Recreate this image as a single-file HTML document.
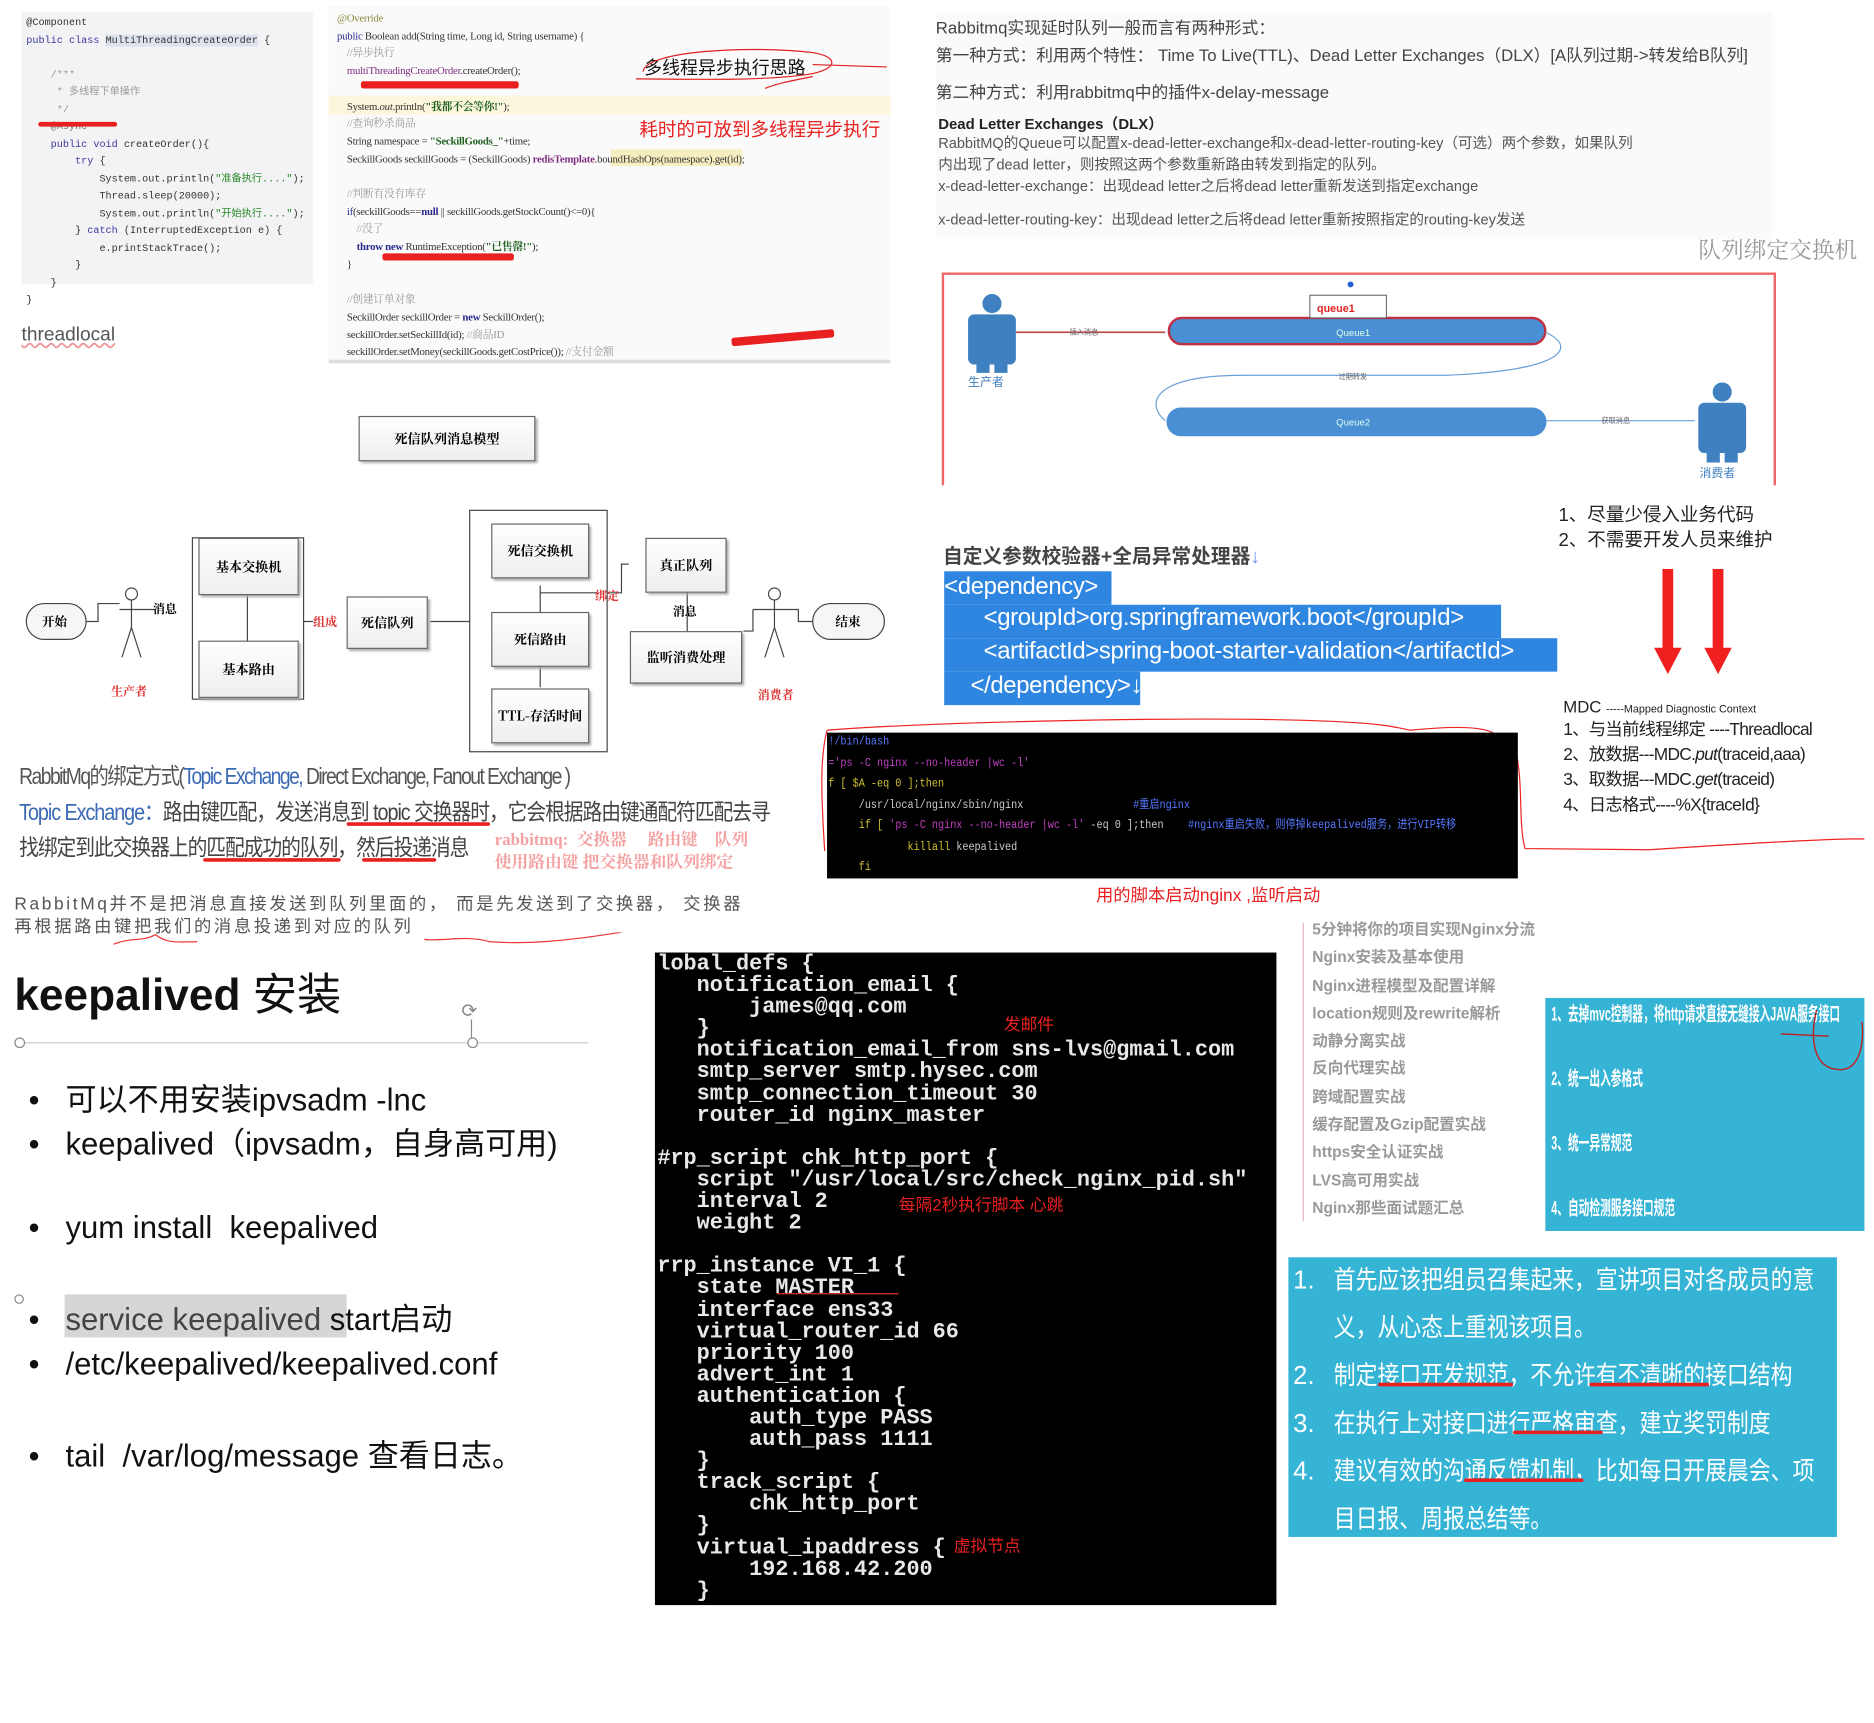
<!DOCTYPE html>
<html><head><meta charset="utf-8"><style>
html,body{margin:0;padding:0;background:#fff;width:1874px;height:1723px;overflow:hidden}
#w{position:absolute;left:0;top:0;width:1568px;height:1442px;overflow:hidden;transform:scale(1.19515);transform-origin:0 0;font-family:"Liberation Sans","Noto Sans CJK SC",sans-serif}
.a{position:absolute;white-space:nowrap}
pre.a{white-space:pre}
.m{font-family:"Liberation Mono","Noto Sans CJK SC",monospace}
.s{font-family:"Liberation Serif","Noto Serif CJK SC",serif}
.box{position:absolute;border:1px solid #666;background:linear-gradient(#fff,#eee);box-shadow:2px 2px 2px #aaa;font-family:"Noto Serif CJK SC",serif;font-size:11px;font-weight:bold;display:flex;align-items:center;justify-content:center}
.ru{position:absolute;height:3px;background:#e82020;border-radius:2px}
</style></head><body><div id="w">

<!-- top-left code -->
<div class="a" style="left:18px;top:10px;width:244px;height:228px;background:#f3f3f5"></div>
<div class="a m" style="left:22px;top:12px;font-size:8.5px;line-height:14.5px;color:#333">
@Component<br>
<span style="color:#3a3aa0">public class</span> <span style="background:#dde3ee">MultiThreadingCreateOrder</span> {<br><br>
&nbsp;&nbsp;&nbsp;&nbsp;<span style="color:#999">/***</span><br>
&nbsp;&nbsp;&nbsp;&nbsp;&nbsp;<span style="color:#999">* 多线程下单操作</span><br>
&nbsp;&nbsp;&nbsp;&nbsp;&nbsp;<span style="color:#999">*/</span><br>
&nbsp;&nbsp;&nbsp;&nbsp;<span style="color:#777">@Async</span><br>
&nbsp;&nbsp;&nbsp;&nbsp;<span style="color:#3a3aa0">public void</span> createOrder(){<br>
&nbsp;&nbsp;&nbsp;&nbsp;&nbsp;&nbsp;&nbsp;&nbsp;<span style="color:#3a3aa0">try</span> {<br>
&nbsp;&nbsp;&nbsp;&nbsp;&nbsp;&nbsp;&nbsp;&nbsp;&nbsp;&nbsp;&nbsp;&nbsp;System.out.println(<span style="color:#2a8a2a">"准备执行...."</span>);<br>
&nbsp;&nbsp;&nbsp;&nbsp;&nbsp;&nbsp;&nbsp;&nbsp;&nbsp;&nbsp;&nbsp;&nbsp;Thread.sleep(20000);<br>
&nbsp;&nbsp;&nbsp;&nbsp;&nbsp;&nbsp;&nbsp;&nbsp;&nbsp;&nbsp;&nbsp;&nbsp;System.out.println(<span style="color:#2a8a2a">"开始执行...."</span>);<br>
&nbsp;&nbsp;&nbsp;&nbsp;&nbsp;&nbsp;&nbsp;&nbsp;} <span style="color:#3a3aa0">catch</span> (InterruptedException e) {<br>
&nbsp;&nbsp;&nbsp;&nbsp;&nbsp;&nbsp;&nbsp;&nbsp;&nbsp;&nbsp;&nbsp;&nbsp;e.printStackTrace();<br>
&nbsp;&nbsp;&nbsp;&nbsp;&nbsp;&nbsp;&nbsp;&nbsp;}<br>
&nbsp;&nbsp;&nbsp;&nbsp;}<br>}</div>
<div class="ru" style="left:32px;top:102px;width:66px;height:4px"></div>
<div class="a" style="left:18px;top:272px;font-size:16px;color:#555;text-decoration:underline wavy #e99;">threadlocal</div>

<!-- middle code -->
<div class="a" style="left:275px;top:5px;width:470px;height:296px;background:#fafafa;border-bottom:3px solid #ddd"></div>
<div class="a" style="left:275px;top:80px;width:470px;height:16px;background:#fbf6dc"></div>
<div class="a" style="left:511px;top:125px;width:110px;height:14px;background:#f7eec0"></div>
<div class="a s" style="left:282px;top:8px;font-size:9px;line-height:14.7px;color:#333;letter-spacing:-.2px">
<span style="color:#8a8a40">@Override</span><br>
<span style="color:#2a2a90">public</span> Boolean add(String time, Long id, String username) {<br>
&nbsp;&nbsp;&nbsp;&nbsp;<span style="color:#999">//异步执行</span><br>
&nbsp;&nbsp;&nbsp;&nbsp;<span style="color:#803080">multiThreadingCreateOrder</span>.createOrder();<br><br>
&nbsp;&nbsp;&nbsp;&nbsp;System.<i>out</i>.println(<b style="color:#206020">"我都不会等你!"</b>);<br>
&nbsp;&nbsp;&nbsp;&nbsp;<span style="color:#999">//查询秒杀商品</span><br>
&nbsp;&nbsp;&nbsp;&nbsp;String namespace = <b style="color:#206020">"SeckillGoods_"</b>+time;<br>
&nbsp;&nbsp;&nbsp;&nbsp;SeckillGoods seckillGoods = (SeckillGoods) <b style="color:#803080">redisTemplate</b>.boundHashOps(namespace).get(id);<br><br>
&nbsp;&nbsp;&nbsp;&nbsp;<span style="color:#999">//判断有没有库存</span><br>
&nbsp;&nbsp;&nbsp;&nbsp;<span style="color:#2a2a90">if</span>(seckillGoods==<b style="color:#2a2a90">null</b> || seckillGoods.getStockCount()&lt;=0){<br>
&nbsp;&nbsp;&nbsp;&nbsp;&nbsp;&nbsp;&nbsp;&nbsp;<span style="color:#999">//没了</span><br>
&nbsp;&nbsp;&nbsp;&nbsp;&nbsp;&nbsp;&nbsp;&nbsp;<b style="color:#2a2a90">throw new</b> RuntimeException(<b style="color:#206020">"已售罄!"</b>);<br>
&nbsp;&nbsp;&nbsp;&nbsp;}<br><br>
&nbsp;&nbsp;&nbsp;&nbsp;<span style="color:#999">//创建订单对象</span><br>
&nbsp;&nbsp;&nbsp;&nbsp;SeckillOrder seckillOrder = <b style="color:#2a2a90">new</b> SeckillOrder();<br>
&nbsp;&nbsp;&nbsp;&nbsp;seckillOrder.setSeckillId(id); <span style="color:#999">//商品ID</span><br>
&nbsp;&nbsp;&nbsp;&nbsp;seckillOrder.setMoney(seckillGoods.getCostPrice()); <span style="color:#999">//支付金额</span></div>
<div class="ru" style="left:302px;top:68px;width:132px;height:6px"></div>
<div class="ru" style="left:320px;top:212px;width:110px;height:6px"></div>
<div class="ru" style="left:612px;top:279px;width:86px;height:7px;transform:rotate(-5deg)"></div>
<div class="a" style="left:539px;top:46px;font-size:15px;color:#111">多线程异步执行思路</div>
<svg class="a" style="left:530px;top:38px" width="220" height="40"><path d="M8 22 C10 4,100 0,150 6 C175 10,170 22,140 25 C100 30,40 28,2 28 M150 16 L212 18 M110 36 C120 32,130 30,150 26" fill="none" stroke="#e02020" stroke-width="1"/></svg>
<div class="a" style="left:535px;top:97px;font-size:15.5px;color:#e82020">耗时的可放到多线程异步执行</div>

<!-- top right -->
<div class="a" style="left:783px;top:10px;width:700px;height:190px;background:#fafafa"></div>
<div class="a" style="left:783px;top:12px;font-size:14px;color:#444;line-height:23px">Rabbitmq实现延时队列一般而言有两种形式：<br>第一种方式：利用两个特性：&nbsp;Time To Live(TTL)、Dead Letter Exchanges（DLX）[A队列过期-&gt;转发给B队列]</div>
<div class="a" style="left:783px;top:67px;font-size:14px;color:#444">第二种方式：利用rabbitmq中的插件x-delay-message</div>
<div class="a" style="left:785px;top:93px;font-size:12.5px;color:#222;font-weight:bold">Dead Letter Exchanges（DLX）</div>
<div class="a" style="left:785px;top:111px;font-size:12.2px;color:#555;line-height:18px">RabbitMQ的Queue可以配置x-dead-letter-exchange和x-dead-letter-routing-key（可选）两个参数，如果队列<br>内出现了dead letter，则按照这两个参数重新路由转发到指定的队列。<br>x-dead-letter-exchange：出现dead letter之后将dead letter重新发送到指定exchange</div>
<div class="a" style="left:785px;top:174px;font-size:12.2px;color:#555">x-dead-letter-routing-key：出现dead letter之后将dead letter重新按照指定的routing-key发送</div>
<div class="a s" style="left:1421px;top:195px;font-size:19px;color:#999">队列绑定交换机</div>
<div class="a" style="left:788px;top:228px;width:698px;height:178px;border:2px solid #e66;border-bottom:none;box-sizing:border-box"></div>
<svg class="a" style="left:790px;top:230px" width="696" height="176">
<g fill="#3f80c0"><circle cx="40" cy="24" r="8"/><rect x="20" y="33" width="40" height="42" rx="5"/><rect x="27" y="70" width="11" height="12"/><rect x="42" y="70" width="11" height="12"/>
<circle cx="651" cy="98" r="8"/><rect x="631" y="107" width="40" height="42" rx="5"/><rect x="638" y="145" width="11" height="12"/><rect x="653" y="145" width="11" height="12"/></g>
<text x="20" y="93" font-size="10" fill="#3f80c0">生产者</text><text x="632" y="169" font-size="10" fill="#3f80c0">消费者</text>
<line x1="60" y1="48" x2="185" y2="48" stroke="#c05050" stroke-width="1.5"/><text x="105" y="50" font-size="6" fill="#666">插入消息</text>
<rect x="188" y="36" width="315" height="22" rx="11" fill="#4a8fd4" stroke="#c03040" stroke-width="2"/><text x="328" y="51" font-size="8" fill="#dfe">Queue1</text>
<rect x="306" y="17" width="64" height="19" fill="#fff" stroke="#555" stroke-width=".8"/><text x="312" y="31" font-size="9" fill="#e02020" font-weight="bold">queue1</text>
<circle cx="340" cy="8" r="2.5" fill="#2060d0"/>
<path d="M503 48 C530 60,520 80,420 84 L250 84 C170 84,170 110,185 122" fill="none" stroke="#6aa0d8"/><text x="330" y="87" font-size="6" fill="#666">过期转发</text>
<rect x="186" y="111" width="318" height="24" rx="12" fill="#4a8fd4"/><text x="328" y="126" font-size="8" fill="#dfe">Queue2</text>
<line x1="504" y1="122" x2="628" y2="122" stroke="#6aa0d8"/><text x="550" y="124" font-size="6" fill="#666">获取消息</text>
</svg>

<!-- dead letter diagram -->
<div class="box" style="left:300px;top:348px;width:146px;height:36px">死信队列消息模型</div>
<svg class="a" style="left:0;top:400px" width="760" height="230">
<g fill="none" stroke="#444" stroke-width="1">
<rect x="22" y="105" width="50" height="30" rx="15" fill="#f6f6f6"/>
<rect x="680" y="105" width="60" height="30" rx="15" fill="#f6f6f6"/>
<path d="M72 120 H82 V105 H100"/><circle cx="110" cy="97" r="5"/><path d="M110 102 V125 M100 110 H130 M110 125 L102 150 M110 125 L118 150"/>
<circle cx="648" cy="97" r="5"/><path d="M648 102 V125 M630 110 H660 M648 125 L640 150 M648 125 L656 150"/>
<path d="M660 110 H668 V120 H680"/>
<rect x="161" y="50" width="93" height="135"/><rect x="393" y="27" width="115" height="202"/>
<path d="M207 90 V140 M452 90 V135 M452 140 V175 M452 96 H500 M508 96 H520 V72 H526 M575 89 V128 M622 128 H630 V110 M254 120 H262 M360 120 H393"/>
</g>
<text x="128" y="113" font-size="10" font-family="Noto Serif CJK SC" font-weight="bold">消息</text>
<text x="35" y="124" font-size="10.5" font-family="Noto Serif CJK SC" font-weight="bold">开始</text>
<text x="699" y="124" font-size="10.5" font-family="Noto Serif CJK SC" font-weight="bold">结束</text>
<text x="262" y="124" font-size="10" fill="#e03030" font-weight="bold" font-family="Noto Serif CJK SC">组成</text>
<text x="498" y="102" font-size="10" fill="#e03030" font-weight="bold" font-family="Noto Serif CJK SC">绑定</text>
<text x="563" y="115" font-size="10" font-weight="bold" font-family="Noto Serif CJK SC">消息</text>
<text x="93" y="182" font-size="10" fill="#e03030" font-weight="bold" font-family="Noto Serif CJK SC">生产者</text>
<text x="634" y="185" font-size="10" fill="#e03030" font-weight="bold" font-family="Noto Serif CJK SC">消费者</text>
</svg>
<div class="box" style="left:166px;top:450px;width:82px;height:46px">基本交换机</div>
<div class="box" style="left:166px;top:536px;width:82px;height:46px">基本路由</div>
<div class="box" style="left:290px;top:499px;width:66px;height:42px">死信队列</div>
<div class="box" style="left:411px;top:438px;width:80px;height:44px">死信交换机</div>
<div class="box" style="left:411px;top:512px;width:80px;height:44px">死信路由</div>
<div class="box" style="left:411px;top:576px;width:80px;height:44px">TTL-存活时间</div>
<div class="box" style="left:540px;top:450px;width:66px;height:44px">真正队列</div>
<div class="box" style="left:527px;top:528px;width:92px;height:42px">监听消费处理</div>

<!-- rabbit text -->
<div class="a" style="left:16px;top:635px;font-size:19px;color:#555;letter-spacing:-1.5px;transform:scaleX(.85);transform-origin:0 0">RabbitMq的绑定方式(<span style="color:#3a6ab5">Topic Exchange,</span> Direct Exchange, Fanout Exchange )</div>
<div class="a" style="left:16px;top:665px;font-size:19px;color:#444;letter-spacing:-1px;transform:scaleX(.87);transform-origin:0 0"><span style="color:#3a6ab5">Topic Exchange：</span>路由键匹配，发送消息到 topic 交换器时，它会根据路由键通配符匹配去寻</div>
<div class="a" style="left:16px;top:695px;font-size:19px;color:#444;letter-spacing:-1px;transform:scaleX(.87);transform-origin:0 0">找绑定到此交换器上的匹配成功的队列，然后投递消息</div>
<div class="ru" style="left:290px;top:688px;width:120px"></div>
<div class="ru" style="left:170px;top:718px;width:115px"></div>
<div class="ru" style="left:303px;top:718px;width:62px"></div>
<div class="a s" style="left:414px;top:694px;font-size:14px;color:#f4a0a0;line-height:19px;font-weight:bold">rabbitmq:&nbsp; 交换器&nbsp;&nbsp;&nbsp;&nbsp; 路由键&nbsp;&nbsp;&nbsp; 队列<br>使用路由键 把交换器和队列绑定</div>
<div class="a" style="left:12px;top:748px;font-size:14.5px;color:#555;letter-spacing:2.2px;line-height:19px">RabbitMq并不是把消息直接发送到队列里面的，&nbsp;而是先发送到了交换器，&nbsp;交换器<br>再根据路由键把我们的消息投递到对应的队列</div>
<svg class="a" style="left:90px;top:780px" width="440" height="20"><path d="M5 10 C20 4,30 8,40 2 C50 10,60 8,75 8 M265 6 C280 8,300 2,320 8 C350 10,380 8,430 0" fill="none" stroke="#e33" stroke-width="1"/></svg>

<!-- keepalived -->
<div class="a" style="left:12px;top:802px;font-size:37px;font-weight:bold;color:#111">keepalived <span style="font-weight:normal">安装</span></div>
<div class="a" style="left:16px;top:872px;width:476px;height:1px;background:#ccc"></div>
<div class="a" style="left:12px;top:868px;width:7px;height:7px;border:1px solid #888;border-radius:50%;background:#fff"></div>
<div class="a" style="left:391px;top:868px;width:7px;height:7px;border:1px solid #888;border-radius:50%;background:#fff"></div>
<div class="a" style="left:386px;top:836px;font-size:16px;color:#888">⟳</div>
<div class="a" style="left:394px;top:853px;width:1px;height:15px;background:#888"></div>
<div class="a" style="left:12px;top:1083px;width:6px;height:6px;border:1px solid #888;border-radius:50%"></div>
<div class="a" style="left:24px;top:902px;font-size:26px;color:#111;line-height:37px">•&nbsp;&nbsp;&nbsp;可以不用安装ipvsadm -lnc<br>•&nbsp;&nbsp;&nbsp;keepalived（ipvsadm，自身高可用)</div>
<div class="a" style="left:24px;top:1012px;font-size:26px;color:#111">•&nbsp;&nbsp;&nbsp;yum install&nbsp; keepalived</div>
<div class="a" style="left:54px;top:1083px;width:236px;height:36px;background:#d6d6d6"></div>
<div class="a" style="left:24px;top:1086px;font-size:26px;color:#111;line-height:37px">•&nbsp;&nbsp;&nbsp;<span style="color:#444">service keepalived</span> start启动<br>•&nbsp;&nbsp;&nbsp;/etc/keepalived/keepalived.conf</div>
<div class="a" style="left:24px;top:1198px;font-size:26px;color:#111">•&nbsp;&nbsp;&nbsp;tail&nbsp; /var/log/message 查看日志。</div>

<!-- big terminal -->
<div class="a" style="left:548px;top:797px;width:520px;height:546px;background:#000;overflow:hidden">
<pre class="a m" style="margin:0;left:2px;top:1px;font-size:18.3px;line-height:18.1px;color:#e8e8e8;font-weight:bold">lobal_defs {
   notification_email {
       james@qq.com
   }
   notification_email_from sns-lvs@gmail.com
   smtp_server smtp.hysec.com
   smtp_connection_timeout 30
   router_id nginx_master

#rp_script chk_http_port {
   script "/usr/local/src/check_nginx_pid.sh"
   interval 2
   weight 2

rrp_instance VI_1 {
   state MASTER
   interface ens33
   virtual_router_id 66
   priority 100
   advert_int 1
   authentication {
       auth_type PASS
       auth_pass 1111
   }
   track_script {
       chk_http_port
   }
   virtual_ipaddress {
       192.168.42.200
   }</pre></div>
<div class="a" style="left:840px;top:847px;font-size:14px;color:#e82020">发邮件</div>
<div class="a" style="left:752px;top:998px;font-size:14px;color:#e82020">每隔2秒执行脚本 心跳</div>
<div class="a" style="left:798px;top:1283px;font-size:14px;color:#e82020">虚拟节点</div>
<div class="a" style="left:650px;top:1082px;width:102px;height:1px;background:#e33"></div>

<!-- small terminal -->
<svg class="a" style="left:680px;top:597px" width="888" height="115"><path d="M12 14 C80 8,300 2,420 6 C480 8,490 12,500 14 C580 6,570 20,588 30 C595 60,590 90,596 113 L700 114 C760 110,860 104,880 105" fill="none" stroke="#e22" stroke-width="1"/><path d="M12 14 C5 40,8 80,10 115" fill="none" stroke="#e22" stroke-width="1"/></svg>
<div class="a" style="left:692px;top:613px;width:578px;height:122px;background:#000;overflow:hidden">
<pre class="a m" style="margin:0;left:1px;top:0;font-size:10px;line-height:17.5px;color:#ccc;transform:scaleX(.85);transform-origin:0 0"><span style="color:#5577ff">!/bin/bash</span>
<span style="color:#c040c0">='ps -C nginx --no-header |wc -l'</span>
<span style="color:#d0c030">f [ $A -eq 0 ];then</span>
     /usr/local/nginx/sbin/nginx                  <span style="color:#5577ff">#重启nginx</span>
     <span style="color:#d0c030">if [</span> <span style="color:#c040c0">'ps -C nginx --no-header |wc -l'</span> -eq 0 ];then    <span style="color:#5577ff">#nginx重启失败，则停掉keepalived服务，进行VIP转移</span>
             <span style="color:#d0c030">killall</span> keepalived
     <span style="color:#d0c030">fi</span></pre></div>
<div class="a" style="left:917px;top:738px;font-size:14.5px;color:#e82020">用的脚本启动nginx ,监听启动</div>

<!-- dependency -->
<div class="a" style="left:789px;top:452px;font-size:16.5px;color:#444;font-weight:bold">自定义参数校验器+全局异常处理器<span style="color:#6a9ae0;font-weight:normal">↓</span></div>
<div class="a" style="left:790px;top:478px;width:140px;height:28px;background:#2f86e0"></div>
<div class="a" style="left:790px;top:506px;width:466px;height:28px;background:#2f86e0"></div>
<div class="a" style="left:790px;top:534px;width:513px;height:28px;background:#2f86e0"></div>
<div class="a" style="left:790px;top:562px;width:164px;height:28px;background:#2f86e0"></div>
<div class="a" style="left:790px;top:477px;font-size:20px;color:#fff;line-height:28.5px;letter-spacing:-.3px">&lt;dependency&gt;</div>
<div class="a" style="left:823px;top:506px;font-size:20px;color:#fff;letter-spacing:-.3px">&lt;groupId&gt;org.springframework.boot&lt;/groupId&gt;</div>
<div class="a" style="left:823px;top:534px;font-size:20px;color:#fff;letter-spacing:-.3px">&lt;artifactId&gt;spring-boot-starter-validation&lt;/artifactId&gt;</div>
<div class="a" style="left:812px;top:563px;font-size:20px;color:#fff;letter-spacing:-.3px">&lt;/dependency&gt;↓</div>

<div class="a" style="left:1304px;top:421px;font-size:15.5px;color:#222;line-height:21px">1、尽量少侵入业务代码<br>2、不需要开发人员来维护</div>
<svg class="a" style="left:1380px;top:476px" width="70" height="90"><path d="M11 0 H20 V66 H27 L15.5 88 L4 66 H11Z M53 0 H62 V66 H69 L57.5 88 L46 66 H53Z" fill="#f02020"/></svg>
<div class="a" style="left:1308px;top:583px;font-size:14px;color:#222">MDC <span style="font-size:9px">-----Mapped Diagnostic Context</span></div>
<div class="a" style="left:1308px;top:601px;font-size:14.5px;color:#222;line-height:21px;letter-spacing:-.6px">1、与当前线程绑定 ----Threadlocal<br>2、放数据---MDC.<i>put</i>(traceid,aaa)<br>3、取数据---MDC.<i>get</i>(traceid)<br>4、日志格式----%X{traceId}</div>

<!-- nginx list -->
<div class="a" style="left:1090px;top:772px;width:1px;height:250px;background:#e6b0c8"></div>
<div class="a" style="left:1098px;top:766px;font-size:13px;color:#999;line-height:23.3px;font-weight:bold">5分钟将你的项目实现Nginx分流<br>Nginx安装及基本使用<br>Nginx进程模型及配置详解<br>location规则及rewrite解析<br>动静分离实战<br>反向代理实战<br>跨域配置实战<br>缓存配置及Gzip配置实战<br>https安全认证实战<br>LVS高可用实战<br>Nginx那些面试题汇总</div>
<div class="a" style="left:1293px;top:835px;width:267px;height:195px;background:#36b4d6"></div>
<div class="a" style="left:1298px;top:823px;font-size:16px;color:#fff;line-height:54px;font-weight:bold;transform:scaleX(.56);transform-origin:0 0">1、去掉mvc控制器，将http请求直接无缝接入JAVA服务接口<br>2、统一出入参格式<br>3、统一异常规范<br>4、自动检测服务接口规范</div>
<svg class="a" style="left:1490px;top:845px" width="72" height="60"><path d="M0 20 L40 22 M30 0 C25 20,25 50,50 50 C65 50,70 30,68 10" fill="none" stroke="#c02020" stroke-width="1.2"/></svg>
<div class="a" style="left:1078px;top:1052px;width:459px;height:234px;background:#36b4d6"></div>
<div class="a" style="left:1082px;top:1051px;font-size:21.5px;color:#fff;line-height:40px">1.<br><br>2.<br>3.<br>4.</div>
<div class="a" style="left:1116px;top:1051px;font-size:21.5px;color:#fff;line-height:40px;transform:scaleX(.85);transform-origin:0 0">首先应该把组员召集起来，宣讲项目对各成员的意<br>义，从心态上重视该项目。<br>制定接口开发规范，不允许有不清晰的接口结构<br>在执行上对接口进行严格审查，建立奖罚制度<br>建议有效的沟通反馈机制，比如每日开展晨会、项<br>目日报、周报总结等。</div>
<div class="ru" style="left:1153px;top:1157px;width:113px"></div>
<div class="ru" style="left:1330px;top:1157px;width:100px"></div>
<div class="ru" style="left:1266px;top:1197px;width:75px"></div>
<div class="ru" style="left:1225px;top:1237px;width:100px"></div>
</div></body></html>
